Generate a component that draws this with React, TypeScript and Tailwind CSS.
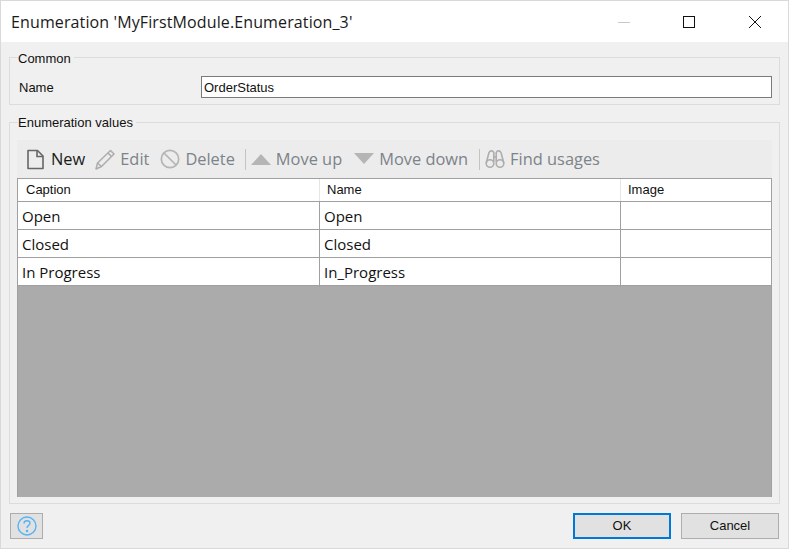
const ui = "'Open Sans','Noto Sans',sans-serif";

function Sep({ className }: { className: string }) {
  return <div className={`h-[21px] w-px bg-[#c4c4c4] ${className}`} />;
}

function Tool({ icon, label, active, className }: { icon: React.ReactNode; label: string; active?: boolean; className?: string }) {
  return (
    <div className={`flex items-center gap-[5px] text-[16.4px] leading-[22px] ${active ? "text-[#1a1a1a]" : "text-[#7c8389]"} ${className ?? ""}`}>
      {icon}
      <span>{label}</span>
    </div>
  );
}

const rows = [
  ["Open", "Open"],
  ["Closed", "Closed"],
  ["In Progress", "In_Progress"],
];

export default function App() {
  return (
    <div className="flex h-[549px] w-[789px] flex-col border border-[#d9d9d9] bg-[#f0f0f0] font-['Liberation_Sans',Arial,sans-serif] text-[13px] text-[#111]">
      <header className="flex h-[41px] shrink-0 items-center bg-white pl-[10px]">
        <h1 className="flex-1 text-[16px] font-normal tracking-[0.12px] text-[#1a1a1a]" style={{ fontFamily: ui }}>
          Enumeration 'MyFirstModule.Enumeration_3'
        </h1>
        <svg width="170" height="16" viewBox="0 0 170 16" fill="none">
          <path d="M0 8.5H12" stroke="#c8c8c8" />
          <rect x="65.5" y="2.5" width="11" height="11" stroke="#111" />
          <path d="M131 2L143 14M143 2L131 14" stroke="#111" />
        </svg>
      </header>

      <main className="flex flex-1 flex-col px-[8px]">
        <fieldset className="mt-[9px] h-[54px] border border-[#dcdcdc] pl-[9px] pr-[7px]">
          <legend className="-ml-px h-[13px] pr-[3px] leading-[15px]">Common</legend>
          <div className="mt-[12px] flex items-center">
            <label className="w-[182px] pt-[2px]">Name</label>
            <input
              readOnly
              value="OrderStatus"
              className="h-[22px] flex-1 border border-[#7a7a7a] bg-white px-[2px] outline-none"
            />
          </div>
        </fieldset>

        <fieldset className="mt-[11px] h-[388px] border border-[#dcdcdc] px-[7px]">
          <legend className="ml-px h-[13px] pr-[3px] leading-[13px]">Enumeration values</legend>
          <div className="mt-[11px] flex h-[357px] flex-col" style={{ fontFamily: ui }}>
            <div className="flex h-[38px] shrink-0 items-center gap-[10px] bg-[#ececec] pl-[9px]">
              <Tool
                active
                className="gap-[6px]"
                label="New"
                icon={
                  <svg width="19" height="21" viewBox="0 0 19 21" fill="none" stroke="#666" strokeWidth="1.6">
                    <path d="M2 1.5H11.5L17 7V19.5H2Z" strokeLinejoin="round" />
                    <path d="M11 1.5V7.5H17" />
                  </svg>
                }
              />
              <Tool
                label="Edit"
                icon={
                  <svg width="20" height="21" viewBox="0 0 20 21" fill="none" stroke="#adadad" strokeWidth="1.5">
                    <path d="M1 20L2.5 14L15.5 1.5L19 5L6.5 17.5Z" strokeLinejoin="round" />
                    <path d="M2.5 14L6.5 17.5M13 4L16.5 7.5" />
                  </svg>
                }
              />
              <Tool
                className="ml-px"
                label="Delete"
                icon={
                  <svg width="20" height="20" viewBox="0 0 20 20" fill="none" stroke="#b5b5b5" strokeWidth="1.7">
                    <circle cx="10" cy="10" r="8.7" />
                    <path d="M4 4L16 16" />
                  </svg>
                }
              />
              <Sep className="-mr-[5px]" />
              <Tool
                label="Move up"
                icon={
                  <svg width="20" height="12" viewBox="0 0 20 12">
                    <path d="M10 1L20 12H0Z" fill="#b5b5b5" />
                  </svg>
                }
              />
              <Tool
                className="ml-[2px]"
                label="Move down"
                icon={
                  <svg width="20" height="12" viewBox="0 0 20 12">
                    <path d="M0 0H20L10 11Z" fill="#b5b5b5" />
                  </svg>
                }
              />
              <Sep className="ml-px -mr-[5px]" />
              <Tool
                label="Find usages"
                icon={
                  <svg width="20" height="20" viewBox="0 0 20 20" fill="none" stroke="#adadad" strokeWidth="1.6">
                    <circle cx="5" cy="14.5" r="3.8" />
                    <circle cx="15" cy="14.5" r="3.8" />
                    <path d="M1.2 14L4 3.5Q5 1.5 7.5 2L8.8 3.5V13M18.8 14L16 3.5Q15 1.5 12.5 2L11.2 3.5V13M8.8 8H11.2" />
                  </svg>
                }
              />
            </div>
            <div className="flex flex-1 flex-col border-x border-t border-[#a0a0a0] bg-[#ababab]">
              <div className="grid h-[23px] shrink-0 grid-cols-[302px_301px_1fr] items-center border-b border-[#a0a0a0] bg-white" style={{ fontFamily: "'Liberation Sans',sans-serif" }}>
                <div className="border-r border-[#e5e5e5] pl-[8px] leading-[22px]">Caption</div>
                <div className="border-r border-[#e5e5e5] pl-[7px] leading-[22px]">Name</div>
                <div className="pl-[7px]">Image</div>
              </div>
              {rows.map(([caption, name]) => (
                <div key={name} className="grid h-[28px] shrink-0 grid-cols-[302px_301px_1fr] border-b border-[#a0a0a0] bg-white text-[15px] leading-[29px] text-[#111]">
                  <div className="border-r border-[#a0a0a0] pl-[4px]">{caption}</div>
                  <div className="border-r border-[#a0a0a0] pl-[4px]">{name}</div>
                  <div />
                </div>
              ))}
            </div>
          </div>
        </fieldset>

        <footer className="flex flex-1 items-center justify-between pl-px pr-px">
          <button className="flex h-[26px] w-[33px] items-center justify-center border border-[#adadad] bg-[#e1e1e1]" aria-label="Help">
            <svg width="20" height="20" viewBox="0 0 20 20" fill="none" stroke="#56b4f5" strokeWidth="1.4">
              <circle cx="10" cy="10" r="9" />
              <path d="M7 7.5C7 5.5 8.5 4.8 10 4.8C11.7 4.8 13 5.8 13 7.3C13 9.3 10 9.5 10 12" />
              <circle cx="10" cy="15" r="0.6" fill="#56b4f5" />
            </svg>
          </button>
          <div className="flex gap-[10px]">
            <button className="h-[26px] w-[98px] border-2 border-[#0078d7] bg-[#e1e1e1]">OK</button>
            <button className="h-[26px] w-[98px] border border-[#adadad] bg-[#e1e1e1]">Cancel</button>
          </div>
        </footer>
      </main>
    </div>
  );
}
